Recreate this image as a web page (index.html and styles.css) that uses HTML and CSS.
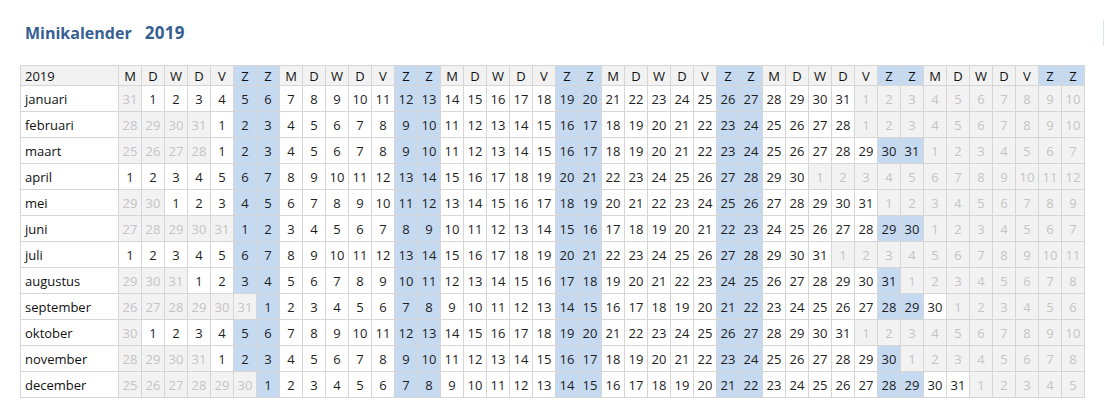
FILE: index.html
```html
<!DOCTYPE html>
<html lang="nl">
<head>
<meta charset="utf-8">
<title>Minikalender 2019</title>
<link rel="stylesheet" href="styles.css">
</head>
<body>
<div class="page">
  <h1 class="title"><span>Minikalender</span><span class="year">2019</span></h1>
  <table class="cal" id="cal">
    <thead>
      <tr id="head"><th class="label">2019</th></tr>
    </thead>
    <tbody id="body"></tbody>
  </table>
</div>
<script src="script.js"></script>
</body>
</html>
```
FILE: styles.css
```css
html, body {
  margin: 0;
  padding: 0;
  background: #ffffff;
}
body {
  font-family: "Open Sans", "Liberation Sans", sans-serif;
  color: #1e1e1e;
  position: relative;
  width: 1105px;
  height: 418px;
  overflow: hidden;
}
body::after {
  content: "";
  position: absolute;
  left: 1103px;
  top: 20px;
  width: 1px;
  height: 26px;
  background: #dbe5f1;
}
.page {
  padding: 21px 0 0 20px;
}
.title {
  margin: 0 0 0 5px;
  height: 24px;
  font-size: 16px;
  line-height: 24px;
  font-weight: 700;
  color: #376092;
  display: flex;
  align-items: baseline;
  gap: 13px;
}
.title .year {
  font-size: 17px;
  letter-spacing: 0.3px;
}
.cal {
  margin-top: 20px;
  border-collapse: collapse;
  table-layout: fixed;
  font-size: 13px;
}
.cal th, .cal td {
  border: 1px solid #d6d6d6;
  padding: 0;
  text-align: center;
  width: 22px;
  white-space: nowrap;
  overflow: hidden;
}
.cal th {
  height: 19px;
  font-weight: normal;
  background: #f2f2f2;
  color: #111;
  line-height: 18px;
}
.cal td {
  height: 25px;
  line-height: 24px;
  background: #ffffff;
}
.cal .label {
  width: 93px;
  text-align: left;
  padding-left: 4px;
}
.cal td.label {
  background: #ffffff;
  color: #111;
}
.cal th.we,
.cal td.we {
  background: #c5d9f1;
}
.cal td.out {
  background: #f2f2f2;
  color: #c4c4c4;
}
```
FILE: script.js
```js
(function () {
  var heads = ["M", "D", "W", "D", "V", "Z", "Z"];
  var months = ["januari", "februari", "maart", "april", "mei", "juni", "juli",
    "augustus", "september", "oktober", "november", "december"];
  var headRow = document.getElementById("head");
  var i;
  for (i = 0; i < 42; i++) {
    var th = document.createElement("th");
    th.textContent = heads[i % 7];
    if (i % 7 >= 5) th.className = "we";
    headRow.appendChild(th);
  }
  var body = document.getElementById("body");
  for (var m = 0; m < 12; m++) {
    var tr = document.createElement("tr");
    var lab = document.createElement("td");
    lab.className = "label";
    lab.textContent = months[m];
    tr.appendChild(lab);
    var first = new Date(2019, m, 1);
    var lead = (first.getDay() + 6) % 7;
    var start = new Date(2019, m, 1 - lead);
    for (i = 0; i < 42; i++) {
      var d = new Date(start.getFullYear(), start.getMonth(), start.getDate() + i);
      var td = document.createElement("td");
      td.textContent = d.getDate();
      if (d.getMonth() !== m) td.className = "out";
      else if (i % 7 >= 5) td.className = "we";
      tr.appendChild(td);
    }
    body.appendChild(tr);
  }
})();
```
